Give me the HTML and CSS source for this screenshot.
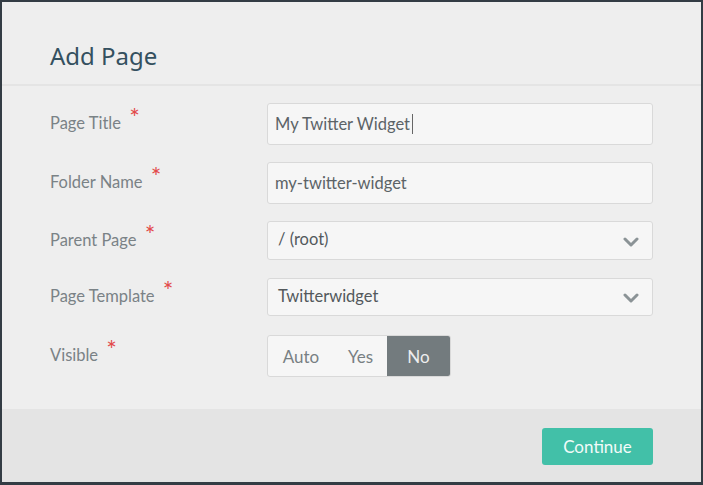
FILE: index.html
```html
<!DOCTYPE html>
<html>
<head>
<meta charset="utf-8">
<link rel="stylesheet" href="styles.css">
</head>
<body>
<div class="modal">
  <div class="modal-header">
    <h1 class="title">Add Page</h1>
  </div>
  <div class="modal-body">
    <div class="row row-input">
      <label class="label">Page Title <span class="req">*</span></label>
      <div class="input"><span>My Twitter Widget</span><span class="caret"></span></div>
    </div>
    <div class="row row-input">
      <label class="label">Folder Name <span class="req">*</span></label>
      <div class="input"><span>my-twitter-widget</span></div>
    </div>
    <div class="row row-select">
      <label class="label">Parent Page <span class="req">*</span></label>
      <div class="select"><span>/ (root)</span>
        <svg class="chev" width="16" height="10" viewBox="0 0 16 10"><path d="M2 2 L8 8 L14 2" fill="none" stroke="#8b9396" stroke-width="3" stroke-linecap="round" stroke-linejoin="round"/></svg>
      </div>
    </div>
    <div class="row row-select">
      <label class="label">Page Template <span class="req">*</span></label>
      <div class="select"><span>Twitterwidget</span>
        <svg class="chev" width="16" height="10" viewBox="0 0 16 10"><path d="M2 2 L8 8 L14 2" fill="none" stroke="#8b9396" stroke-width="3" stroke-linecap="round" stroke-linejoin="round"/></svg>
      </div>
    </div>
    <div class="row row-input">
      <label class="label">Visible <span class="req">*</span></label>
      <div class="toggle">
        <span class="seg seg-auto">Auto</span>
        <span class="seg seg-yes">Yes</span>
        <span class="seg seg-no active">No</span>
      </div>
    </div>
  </div>
  <div class="modal-footer">
    <button class="btn">Continue</button>
  </div>
</div>
</body>
</html>
```
FILE: styles.css
```css
* { box-sizing: border-box; }
html, body { margin: 0; padding: 0; }
body {
  background: #333c44;
  width: 703px;
  height: 485px;
  padding: 2px 2px 3px 2px;
  font-family: "Lato", "Liberation Sans", sans-serif;
}
.modal {
  width: 699px;
  height: 480px;
  background: #eeeeee;
  display: flex;
  flex-direction: column;
}
.modal-header {
  height: 84px;
  border-bottom: 2px solid #e4e4e4;
  padding: 38px 48px 0;
}
.title {
  margin: 0;
  font-family: "Noto Sans", "Open Sans", sans-serif;
  font-weight: 400;
  font-size: 24px;
  letter-spacing: 0;
  color: #34505f;
  line-height: 32px;
}
.modal-body {
  flex: 1;
  padding: 17px 48px 0;
  display: flex;
  flex-direction: column;
}
.row {
  display: flex;
  align-items: center;
}
.row-input { height: 42px; margin-bottom: 17px; }
.row-select { height: 39px; margin-bottom: 18px; }
.row-select + .row-select { height: 38px; margin-bottom: 19px; }
.label {
  width: 217px;
  font-size: 16.5px;
  color: #7a8286;
  margin-top: -10px;
}
.req {
  color: #e24a4a;
  font-size: 25px;
  margin-left: 4px;
  position: relative;
  top: -2px;
}
.input, .select {
  flex: 0 0 386px;
  height: 100%;
  background: #f6f6f6;
  border: 1px solid #d9d9d9;
  border-radius: 3px;
  display: flex;
  align-items: center;
  padding-left: 7px;
  font-size: 16.5px;
  color: #5c6367;
}
.caret {
  display: inline-block;
  width: 1px;
  height: 20px;
  background: #666;
  margin-left: 2px;
}
.select {
  padding-left: 10px;
  padding-right: 13px;
  justify-content: space-between;
  color: #53595c;
}
.select span { margin-top: -3px; }
.chev { margin-top: 2px; }
.toggle {
  display: flex;
  width: 184px;
  height: 42px;
  border: 1px solid #d9d9d9;
  border-radius: 3px;
  background: #f6f6f6;
  overflow: hidden;
}
.seg {
  display: flex;
  align-items: center;
  justify-content: center;
  font-size: 17px;
  color: #787f83;
}
.seg-auto { width: 66px; }
.seg-yes { width: 53px; }
.seg-no { flex: 1; }
.seg.active { background: #737b7e; color: #eeeeee; }
.modal-footer {
  height: 73px;
  background: #e4e4e4;
  display: flex;
  justify-content: flex-end;
  align-items: flex-start;
  padding: 19px 48px 0 0;
}
.btn {
  width: 111px;
  height: 37px;
  background: #42c0a8;
  border: none;
  border-radius: 3px;
  color: #f2fbf9;
  font-family: "Lato", sans-serif;
  font-size: 17px;
  padding: 0;
}
```
